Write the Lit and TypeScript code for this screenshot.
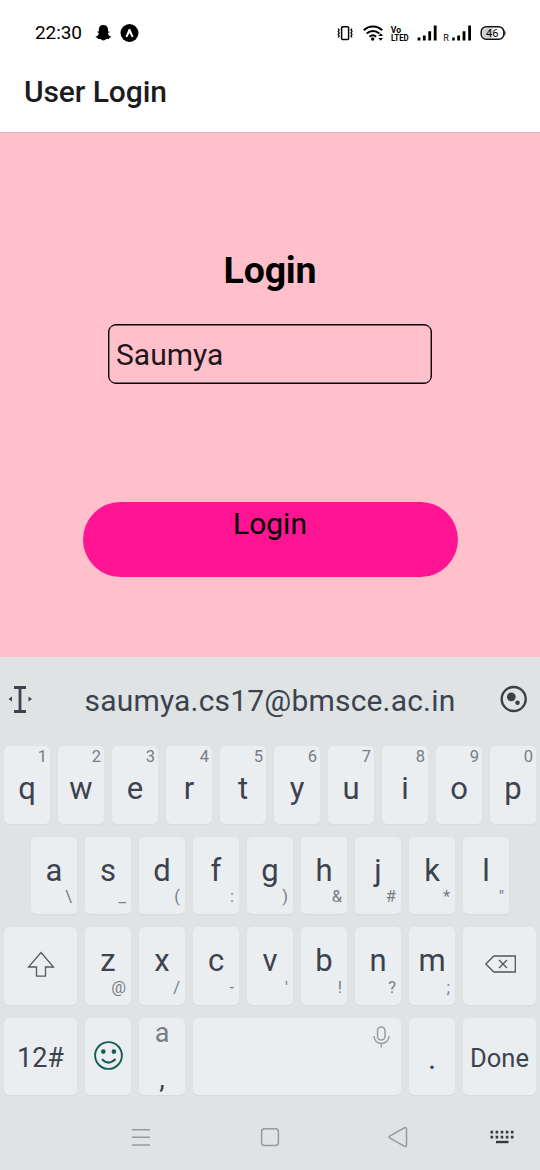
import { LitElement, html, css, svg, nothing } from "lit";
import { customElement, property } from "lit/decorators.js";
import { classMap } from "lit/directives/class-map.js";

@customElement("status-bar")
class StatusBar extends LitElement {
  static styles = css`
    :host { display: flex; height: 66px; align-items: center; box-sizing: border-box; padding-left: 35px; color: #000; }
    .time { font-size: 19px; line-height: 22px; width: 60px; letter-spacing: -0.1px; }
    .left { display: block; width: 44px; height: 20px; }
    .right { display: block; width: 174px; height: 24px; margin-left: 196px; }
    .bold { font: 700 8.8px Roboto, sans-serif; }
    .roam { font: 400 9px Roboto, sans-serif; }
    .level { font: 400 11px Roboto, sans-serif; }
  `;
  render() {
    return html`
      <span class="time">22:30</span>
      <svg class="left" viewBox="0 0 44 20">
        <path d="M8.4 2.1c3 0 4.6 1.9 4.6 4.6v1.8c.6.3 1.300-.1 1.500.3.3.6-1.100 1-1.600 1.400.3 1.900 1.600 2.900 3.300 3.400.4.6-1.300 1.200-2 1.300-.2.5-.1.900-.5 1-.8.100-1.600-.2-2.400.2-.9.500-1.600 1.500-2.900 1.500s-2-1-2.900-1.500c-.8-.4-1.600-.1-2.400-.2-.4-.1-.3-.5-.5-1-.7-.1-2.400-.7-2-1.300 1.700-.5 3-1.500 3.300-3.400-.5-.4-1.900-.8-1.600-1.400.2-.4.900 0 1.500-.3V6.700c0-2.700 1.600-4.600 4.600-4.600z" />
        <circle cx="34.500" cy="10" r="9" />
        <path d="M30.500 13.700l3.200-7.800h1.600l3.200 7.800-1.700.5-2.300-4.200-2.300 4.200z" fill="#fff" />
      </svg>
      <svg class="right" viewBox="335 21 174 24">
        <g fill="none" stroke="#000" stroke-width="1.500">
          <rect x="341.600" y="26.800" width="7" height="12.600" rx="1" />
          <path d="M338.200 28.500l1 1.500-1 1.500 1 1.500-1 1.500 1 1.500-1 1.500M352 28.500l-1 1.500 1 1.500-1 1.500 1 1.500-1 1.500 1 1.500" stroke-width="1.300" />
          <path d="M363.800 30.200c5.300-5 13-5 18.400 0M366.700 33.600c3.700-3.500 8.900-3.500 12.600 0M369.500 36.700c2.200-1.800 4.600-1.800 6.600 0" stroke-width="2" />
        </g>
        <circle cx="372.700" cy="39" r="1.700" />
        <path d="M378.400 36l2.300-2.800 2.300 2.800zM378.400 38l2.300 2.800 2.300-2.800z" />
        <text class="bold" x="390.800" y="32.700" textLength="10.300" lengthAdjust="spacingAndGlyphs">Vo</text>
        <text class="bold" x="390.900" y="40.800" textLength="17.800" lengthAdjust="spacingAndGlyphs">LTED</text>
        <path d="M417.600 37.500h2.800v3h-2.800zM422.900 35.500h2.800v5h-2.800zM428.300 31.200h2.800v9.300h-2.800zM433.800 25.500h2.800v15h-2.800z" />
        <text class="roam" x="443.300" y="41">R</text>
        <path d="M452.200 37.500h2.600v3h-2.600zM457.200 35.500h2.800v5h-2.800zM462.600 31.200h2.800v9.300h-2.800zM468.200 25.500h2.800v15h-2.800z" />
        <rect x="481.200" y="26.700" width="22.600" height="12.600" rx="5" fill="#fff" stroke="#111" stroke-width="1.500" />
        <path d="M486.500 28h6v10h-6a4 4 0 0 1-4-4v-2a4 4 0 0 1 4-4z" fill="#d0d0d0" />
        <path d="M504.400 30q2.200 3 0 6z" />
        <text class="level" x="486" y="36.900" textLength="12.500">46</text>
      </svg>
    `;
  }
}

@customElement("kb-key")
class KbKey extends LitElement {
  @property() label = "";
  @property() hint = "";
  @property({ type: Boolean }) top = false;
  @property() kind = "";
  static styles = css`
    :host { display: grid; height: 77.5px; border-radius: 5px; background: #ebeef1; box-shadow: 0 0.5px 1px #d5dadb; color: #3d434e; overflow: hidden; }
    .label, .hint, ::slotted(*) { grid-area: 1 / 1; }
    .label { justify-self: center; font-size: 31px; line-height: 36px; padding-top: 16px; }
    .numbered { padding-top: 24.5px; }
    .symbols { font-size: 27px; padding-top: 22px; }
    .action { font-size: 25.5px; padding-top: 22px; }
    .hint { justify-self: end; align-self: end; font-size: 16.5px; line-height: 20px; padding: 0 5px 7px 0; color: #787d84; }
    .above { align-self: start; padding: 1px 3px 0 0; }
  `;
  render() {
    return html`
      ${this.label
        ? html`<span class=${classMap({ label: true, numbered: this.top, symbols: this.kind === "symbols", action: this.kind === "action" })}>${this.label}</span>`
        : nothing}
      ${this.hint ? html`<span class=${classMap({ hint: true, above: this.top })}>${this.hint}</span>` : nothing}
      <slot></slot>
    `;
  }
}

const keyRow = (letters: string, hints: string, top = false) =>
  [...letters].map((c, i) => html`<kb-key .label=${c} .hint=${hints[i]} .top=${top}></kb-key>`);

@customElement("soft-keyboard")
class SoftKeyboard extends LitElement {
  static styles = css`
    :host { display: flex; flex-direction: column; height: 513px; background: #dfe3e4; color: #3d434e; }
    .suggest { display: flex; height: 89px; align-items: center; justify-content: space-between; padding: 0 11px 0 5px; box-sizing: border-box; }
    .suggest svg { display: block; width: 30px; height: 30px; margin-bottom: 5px; }
    .word { font-size: 30px; line-height: 36px; white-space: nowrap; letter-spacing: 0.18px; padding-left: 6px; margin-bottom: 2px; }
    .rows { display: flex; flex-direction: column; gap: 13px; padding: 0 4px; }
    .row { display: grid; grid-template-columns: repeat(10, 46px); column-gap: 8px; }
    .inset { grid-template-columns: repeat(9, 46px); padding-left: 27px; }
    .mixed { grid-template-columns: 73px repeat(7, 46px) 73px; }
    .bottom { grid-template-columns: 73px 46px 46px 208px 46px 73px; }
    .full { display: block; width: 100%; height: 77px; }
    .comma { display: flex; flex-direction: column; align-items: center; height: 77px; }
    .small { font-size: 27px; line-height: 30px; color: #787d84; }
    .mark { font-size: 28px; line-height: 30px; padding-top: 16px; }
    .dot { font-size: 31px; line-height: 36px; text-align: center; padding-top: 23px; }
    .nav { display: block; width: 540px; height: 75px; }
    .line { fill: none; stroke: #979a9d; stroke-width: 1.5; }
  `;
  render() {
    return html`
      <div class="suggest">
        <svg viewBox="0 0 30 30"><path d="M9 3.500h12M9 27.500h12M15 3.500v24" fill="none" stroke="#3d434e" stroke-width="2.800" /><path d="M7 12.500v5l-3.500-2.500zM23.500 12.500v5l3.500-2.500z" fill="#3d434e" /></svg>
        <span class="word">saumya.cs17@bmsce.ac.in</span>
        <svg viewBox="0 0 30 30"><circle cx="14.700" cy="15" r="12" fill="none" stroke="#3d3f47" stroke-width="2.400" /><circle cx="12.300" cy="12.800" r="4.400" fill="#3d3f47" /><circle cx="18.500" cy="18.800" r="2.300" fill="#3d3f47" /></svg>
      </div>
      <div class="rows">
        <div class="row">${keyRow("qwertyuiop", "1234567890", true)}</div>
        <div class="row inset">${keyRow("asdfghjkl", '\\_(:)&#*"')}</div>
        <div class="row mixed">
          <kb-key><svg class="full" viewBox="0 0 73 77"><path d="M37 25.500l12.500 14.500h-8v9.200h-9v-9.200h-8z" fill="none" stroke="#555a60" stroke-width="1.300" /></svg></kb-key>
          ${keyRow("zxcvbnm", "@/-'!?;")}
          <kb-key><svg class="full" viewBox="0 0 73 77"><path d="M22.800 37l8-8h21.500v16h-21.500zM36 33l8 8M44 33l-8 8" fill="none" stroke="#50555b" stroke-width="1.300" /></svg></kb-key>
        </div>
        <div class="row bottom">
          <kb-key label="12#" kind="symbols"></kb-key>
          <kb-key><svg class="full" viewBox="0 0 46 77"><circle cx="23.500" cy="37.500" r="13.400" fill="none" stroke="#145f4f" stroke-width="1.900" /><circle cx="18.300" cy="33.600" r="2.300" fill="#145f4f" /><circle cx="28.900" cy="33.600" r="2.300" fill="#145f4f" /><path d="M17 41.100q6.500 7 13.500 0" fill="none" stroke="#145f4f" stroke-width="2.100" /></svg></kb-key>
          <kb-key><div class="comma"><span class="small">a</span><span class="mark">,</span></div></kb-key>
          <kb-key><svg class="full" viewBox="0 0 208 77"><g fill="none" stroke="#9a9da0" stroke-width="1.500"><rect x="184.500" y="9" width="7.500" height="13" rx="3.700" /><path d="M181 18c0 10 15 10 15 0M188.300 25.500v4" /></g></svg></kb-key>
          <kb-key><div class="dot">.</div></kb-key>
          <kb-key label="Done" kind="action"></kb-key>
        </div>
      </div>
      <svg class="nav" viewBox="0 1095 540 75">
        <g class="line">
          <path d="M132 1129.700h18M132 1137.300h18M132 1144.900h18" />
          <rect x="261.600" y="1128.700" width="16.800" height="16.800" rx="3" />
          <path d="M404.500 1127.800q2-.8 2 1.500v15.600q0 2.300-2 1.500l-14.500-8.200q-1.700-1.200 0-2.400z" />
        </g>
        ${[0, 1, 2, 3, 4].map((i) => svg`<path d="M${490.500 + i * 5.100} 1130.800h2.600v2.600h-2.600zm0 5h2.600v2.600h-2.600z" fill="#35383d" />`)}
        <path d="M496 1140.800h12.500v2.400h-12.500z" fill="#35383d" />
      </svg>
    `;
  }
}

@customElement("app-root")
class AppRoot extends LitElement {
  static styles = css`
    :host { display: flex; flex-direction: column; width: 540px; height: 1170px; overflow: hidden; font-family: Roboto, "Liberation Sans", sans-serif; background: #ffc0cb; }
    .header { height: 132px; background: #fff; box-shadow: 0 1px 1px #e3b3bc; z-index: 1; }
    .title { margin: 0; padding: 8px 0 0 24px; font-size: 30px; line-height: 36px; font-weight: 500; color: #1c1c1e; letter-spacing: -0.1px; }
    .screen { flex: 1; display: flex; flex-direction: column; align-items: center; }
    .heading { margin: 116px 0 0; font-size: 37.5px; line-height: 44px; font-weight: 700; color: #000; letter-spacing: -0.2px; }
    .field { box-sizing: border-box; width: 324px; height: 60px; margin-top: 31.5px; border: 1px solid #000; box-shadow: inset 0 0 0 0.4px #000; border-radius: 8px; padding: 12.500px 7px 10px; font-size: 30px; line-height: 36px; color: #211619; }
    .submit { width: 375px; height: 75px; margin-top: 118.5px; border-radius: 38px; background: #ff1493; text-align: center; font-size: 30px; line-height: 44px; color: #000; }
  `;
  render() {
    return html`
      <div class="header">
        <status-bar></status-bar>
        <h1 class="title">User Login</h1>
      </div>
      <div class="screen">
        <h2 class="heading">Login</h2>
        <div class="field">Saumya</div>
        <div class="submit" role="button">Login</div>
      </div>
      <soft-keyboard></soft-keyboard>
    `;
  }
}
